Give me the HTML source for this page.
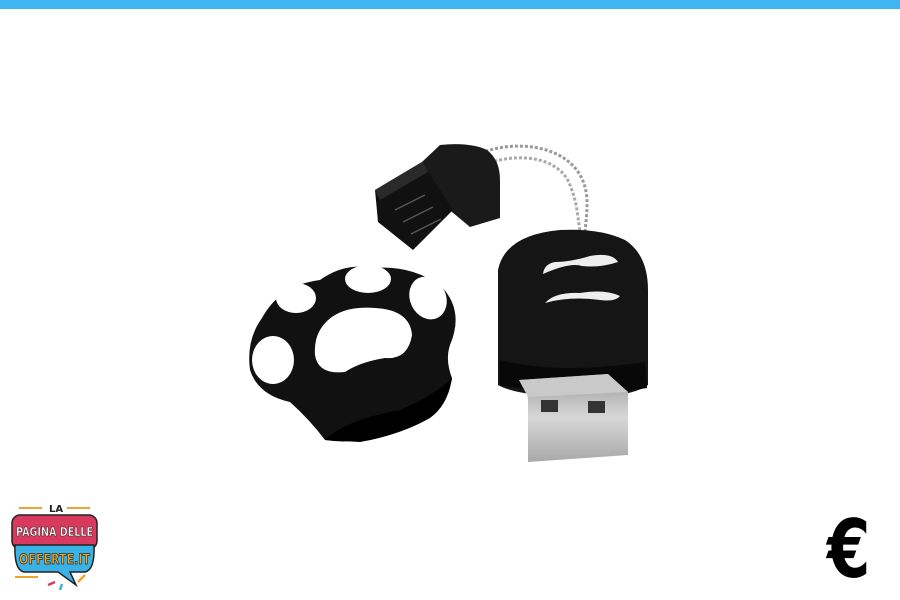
<!DOCTYPE html>
<html><head><style>
html,body{margin:0;padding:0;width:900px;height:600px;background:#fff;overflow:hidden;position:relative;font-family:"Liberation Sans",sans-serif}
.bar{position:absolute;left:0;top:0;width:900px;height:9px;background:#3fb5f1}
.euro{position:absolute;left:827px;top:505px;font:bold 80px "DejaVu Sans",sans-serif;color:#000;line-height:90px;transform:scaleX(0.78);transform-origin:left top}
</style></head><body>
<div class="bar"></div>
<svg width="900" height="600" style="position:absolute;left:0;top:0">
<defs>
<linearGradient id="m" x1="0" y1="0" x2="0" y2="1"><stop offset="0" stop-color="#9a9a9a"/><stop offset=".5" stop-color="#d8d8d8"/><stop offset="1" stop-color="#a8a8a8"/></linearGradient>
</defs>
<path d="M472 158 C500 140 560 140 580 175 C592 195 585 220 585 235" fill="none" stroke="#999" stroke-width="3" stroke-dasharray="3 2"/>
<path d="M480 166 C520 150 560 158 570 185 C578 205 578 220 580 232" fill="none" stroke="#aaa" stroke-width="3" stroke-dasharray="3 2"/>
<path d="M422 162 L440 145 Q470 142 487 150 Q500 160 500 180 L500 218 L470 227 L452 212 Z" fill="#1a1a1a"/>
<path d="M375 190 L422 162 L453 210 L413 250 L378 222 Z" fill="#111"/>
<path d="M375 190 L422 162 L428 172 L380 200 Z" fill="#2a2a2a"/>
<g stroke="#555" stroke-width="1.5"><line x1="395" y1="210" x2="425" y2="195"/><line x1="403" y1="222" x2="433" y2="207"/><line x1="411" y1="234" x2="441" y2="219"/></g>
<path d="M262 318 Q280 285 320 280 Q345 262 375 268 Q410 265 440 285 Q465 310 450 345 Q445 360 452 378 Q448 400 430 415 Q410 432 375 437 Q350 444 325 440 Q310 420 290 402 Q258 395 250 370 Q246 340 262 318 Z" fill="#111"/>
<path d="M325 440 Q345 420 400 410 Q435 395 452 378 Q448 405 430 418 Q400 435 360 442 Z" fill="#000"/>
<ellipse cx="296" cy="298" rx="20" ry="15" fill="#fff"/>
<ellipse cx="368" cy="279" rx="23" ry="14" fill="#fff"/>
<ellipse cx="428" cy="298" rx="18" ry="22" fill="#fff" transform="rotate(-25 428 298)"/>
<ellipse cx="273" cy="360" rx="21" ry="24" fill="#fff"/>
<path d="M320 330 Q335 305 375 308 Q410 310 412 335 Q408 360 385 358 Q360 362 345 372 Q318 375 315 355 Q314 340 320 330 Z" fill="#fff"/>
<path d="M498 270 Q505 235 560 230 Q600 228 625 240 Q648 255 648 290 L648 385 Q630 398 573 398 Q515 395 498 385 Z" fill="#151515"/>
<path d="M500 360 Q560 375 645 362 L647 388 Q575 400 500 385 Z" fill="#080808"/>
<path d="M543 274 Q570 262 582 266 Q600 268 618 262 Q612 252 590 256 Q570 262 555 262 Q544 264 543 274 Z" fill="#eee"/>
<path d="M545 303 Q570 296 600 300 Q615 302 620 296 Q605 289 580 293 Q555 292 545 303 Z" fill="#eee"/>
<path d="M519 380 L608 374 L628 392 L628 455 L528 462 L528 395 Z" fill="url(#m)"/>
<path d="M519 380 L608 374 L628 392 L528 397 Z" fill="#c9c9c9"/>
<rect x="541" y="400" width="17" height="12" fill="#333"/>
<rect x="588" y="401" width="17" height="12" fill="#333"/>
<g font-family="'DejaVu Sans',sans-serif">
<line x1="19" y1="508" x2="42" y2="508" stroke="#f0a32b" stroke-width="2"/>
<line x1="67" y1="508" x2="90" y2="508" stroke="#f0a32b" stroke-width="2"/>
<text x="49" y="512" font-size="10" font-weight="bold" fill="#222">LA</text>
<rect x="12" y="515" width="85" height="34" rx="8" fill="#d83a5d" stroke="#222" stroke-width="1.5"/>
<text x="16" y="536" font-size="12" font-weight="bold" fill="#fff" textLength="77" lengthAdjust="spacingAndGlyphs" stroke="#222" stroke-width=".5">PAGINA DELLE</text>
<path d="M15 545 L94 545 Q95 570 85 572 L70 572 L76 585 L58 572 L24 572 Q14 570 15 545 Z" fill="#3ab2e6" stroke="#222" stroke-width="1.5"/>
<text x="19" y="564" font-size="14" font-weight="bold" fill="#f5a623" textLength="71" lengthAdjust="spacingAndGlyphs" stroke="#222" stroke-width=".7">OFFERTE.IT</text>
<line x1="15" y1="577" x2="38" y2="577" stroke="#f0a32b" stroke-width="2"/>
<line x1="48" y1="585" x2="55" y2="582" stroke="#d83a5d" stroke-width="2.5"/>
<line x1="60" y1="590" x2="62" y2="584" stroke="#3ab2e6" stroke-width="2.5"/>
<line x1="78" y1="582" x2="85" y2="575" stroke="#f0a32b" stroke-width="2.5"/>
</g>
</svg>
<div class="euro">€</div>
</body></html>
